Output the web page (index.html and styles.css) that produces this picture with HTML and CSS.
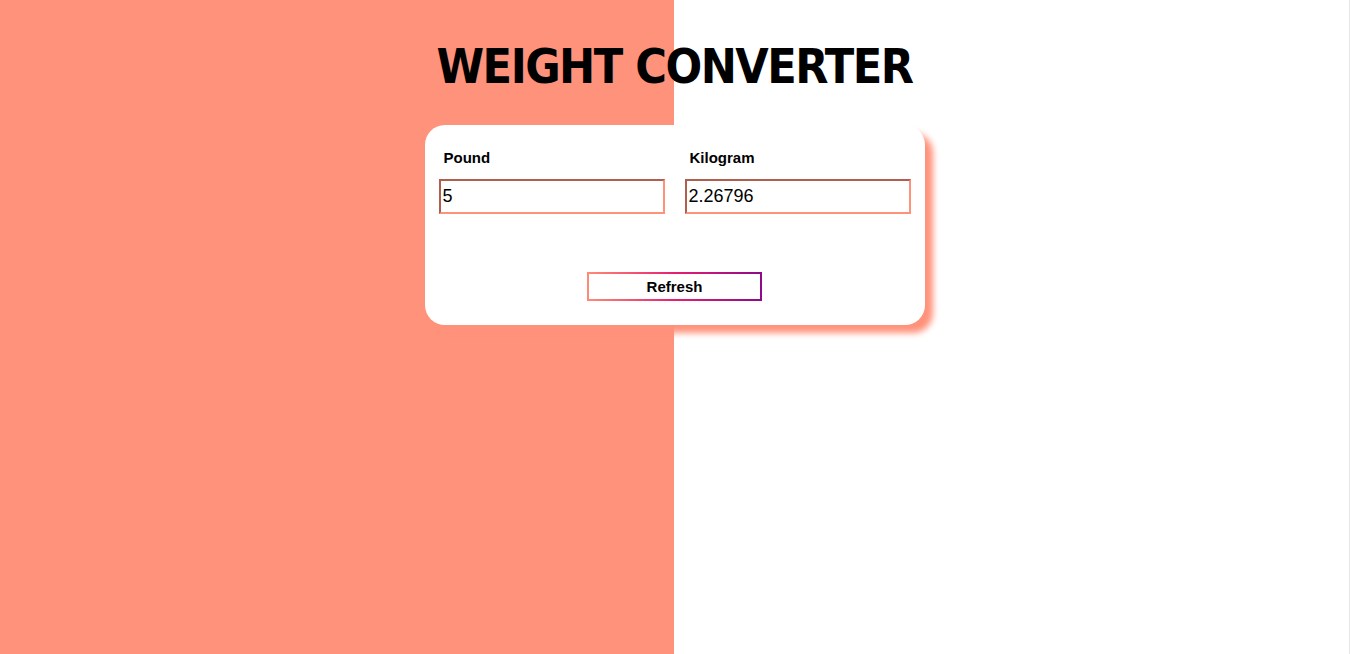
FILE: index.html
```html
<!DOCTYPE html>
<html>
<head>
<meta charset="utf-8">
<link rel="stylesheet" href="styles.css">
</head>
<body>
<div class="page">
  <h1 class="title">WEIGHT CONVERTER</h1>
  <div class="card">
    <div class="fields">
      <div class="field">
        <label class="label">Pound</label>
        <input class="input" type="text" value="5">
      </div>
      <div class="field">
        <label class="label">Kilogram</label>
        <input class="input" type="text" value="2.26796">
      </div>
    </div>
    <div class="actions">
      <button class="btn">Refresh</button>
    </div>
  </div>
</div>
</body>
</html>
```
FILE: styles.css
```css
html, body {
  margin: 0;
  padding: 0;
  height: 100%;
}
body {
  background: linear-gradient(to right, #ff927b 0, #ff927b 674px, #ffffff 674px);
  border-right: 1px solid #e6e6e6;
  box-sizing: border-box;
  font-family: "Liberation Sans", sans-serif;
}
.page {
  display: flex;
  flex-direction: column;
  align-items: center;
  padding-top: 40px;
}
.title {
  margin: 0;
  font-family: "DejaVu Sans Condensed", "DejaVu Sans", sans-serif;
  font-weight: bold;
  font-size: 48px;
  line-height: 52px;
  height: 85px;
  letter-spacing: -1.5px;
  color: #000;
}
.card {
  width: 500px;
  height: 200px;
  box-sizing: border-box;
  background: #fff;
  border-radius: 20px;
  box-shadow: 8px 8px 6px #ff927b;
  padding: 22px 14px 0 14px;
  display: flex;
  flex-direction: column;
}
.fields {
  display: flex;
  gap: 20px;
}
.field {
  display: flex;
  flex-direction: column;
  width: 226px;
}
.label {
  font-family: "Liberation Sans", Arial, sans-serif;
  font-weight: bold;
  font-size: 15px;
  line-height: 22px;
  padding-left: 5px;
  margin-bottom: 10px;
  color: #000;
}
.input {
  width: 226px;
  height: 35px;
  box-sizing: border-box;
  border: 2px solid #ff927b;
  border-top-color: #b05e4d;
  border-left-color: #b05e4d;
  font-family: "Liberation Sans", Arial, sans-serif;
  font-size: 18px;
  padding: 0 2px;
  margin: 0;
  color: #000;
  outline: none;
}
.actions {
  display: flex;
  justify-content: center;
  margin-top: 58px;
}
.btn {
  width: 175px;
  height: 29px;
  box-sizing: border-box;
  background: #fff;
  border: 2px solid;
  border-image: linear-gradient(to right, #ff8a75, #e91e70, #8e0a8a) 1;
  font-family: "Liberation Sans", Arial, sans-serif;
  font-weight: bold;
  font-size: 15px;
  color: #000;
  padding: 0;
}
```
